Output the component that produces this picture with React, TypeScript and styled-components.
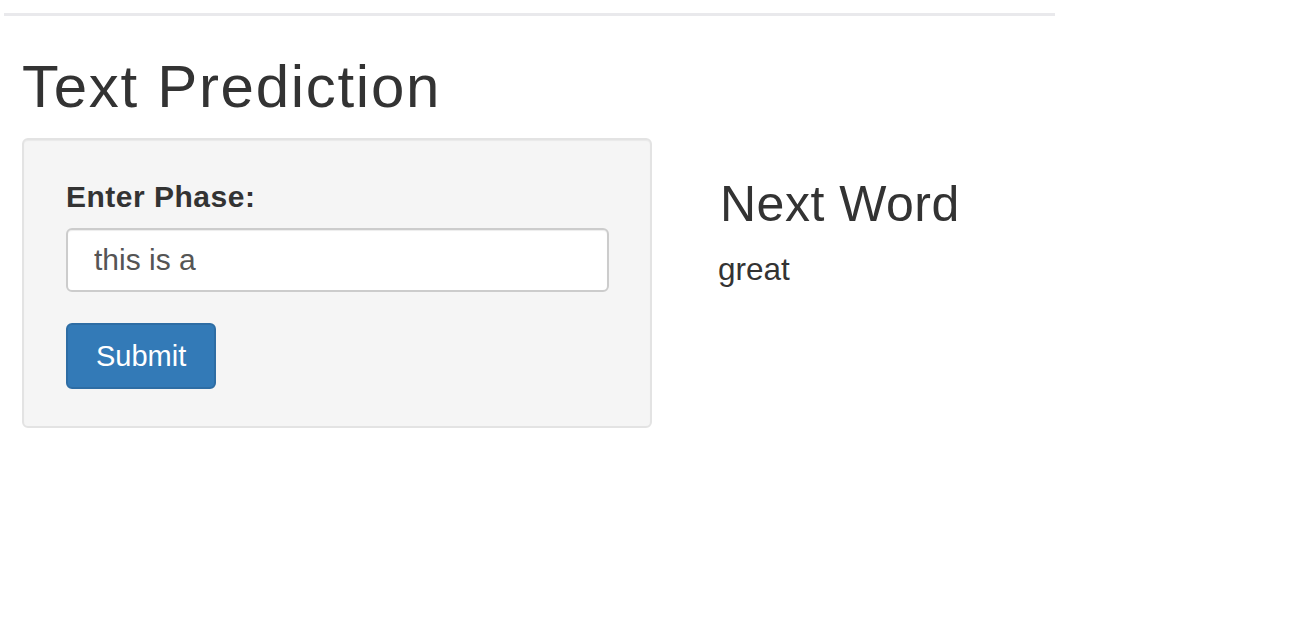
import React from "react";
import styled, { createGlobalStyle } from "styled-components";

const Global = createGlobalStyle`
  html, body { margin: 0; padding: 0; background: #fff; }
  body { font-family: "Liberation Sans", Arial, Helvetica, sans-serif; color: #333; }
  * { box-sizing: border-box; }
`;

const Page = styled.div`
  padding: 13px 0 0 4px;
`;

const Rule = styled.div`
  width: 1051px;
  height: 3px;
  background: #e9e9ec;
`;

const Content = styled.div`
  padding-left: 18px;
`;

const Title = styled.h2`
  margin: 36px 0 0;
  font-size: 60px;
  line-height: 69px;
  letter-spacing: 1.7px;
  font-weight: 400;
  color: #333;
`;

const Row = styled.div`
  display: flex;
  align-items: flex-start;
  gap: 66px;
  margin-top: 17px;
`;

const Well = styled.form`
  width: 630px;
  padding: 37px 41px 37px 42px;
  background: #f5f5f5;
  border: 2px solid #e3e3e3;
  border-radius: 6px;
  box-shadow: inset 0 1px 1px rgba(0, 0, 0, 0.05);
  display: flex;
  flex-direction: column;
  align-items: flex-start;
`;

const Label = styled.label`
  display: block;
  font-size: 30px;
  line-height: 40px;
  font-weight: 700;
  letter-spacing: 0.5px;
  color: #333;
  margin-bottom: 11px;
`;

const Input = styled.input`
  width: 100%;
  height: 64px;
  padding: 0 26px;
  border: 2px solid #ccc;
  border-radius: 6px;
  background: #fff;
  font-family: inherit;
  font-size: 30px;
  color: #555;
  box-shadow: inset 0 1px 1px rgba(0, 0, 0, 0.075);
  outline: none;
`;

const Button = styled.button`
  margin-top: 31px;
  height: 66px;
  padding: 0 28px;
  border: 2px solid #2e6da4;
  border-radius: 6px;
  background: #337ab7;
  color: #fff;
  font-family: inherit;
  font-size: 29px;
  cursor: pointer;
`;

const Output = styled.div`
  margin-top: 39px;
`;

const Heading = styled.h3`
  margin: 0 0 0 2px;
  font-size: 50px;
  line-height: 55px;
  letter-spacing: 0.5px;
  font-weight: 400;
  color: #333;
`;

const Result = styled.div`
  margin-top: 15px;
  font-size: 31.5px;
  line-height: 45px;
  color: #333;
`;

export default function App() {
  return (
    <>
      <Global />
      <Page>
        <Rule />
        <Content>
          <Title>Text Prediction</Title>
          <Row>
            <Well onSubmit={(e) => e.preventDefault()}>
              <Label htmlFor="phrase">Enter Phase:</Label>
              <Input id="phrase" type="text" defaultValue="this is a" />
              <Button type="submit">Submit</Button>
            </Well>
            <Output>
              <Heading>Next Word</Heading>
              <Result>great</Result>
            </Output>
          </Row>
        </Content>
      </Page>
    </>
  );
}
